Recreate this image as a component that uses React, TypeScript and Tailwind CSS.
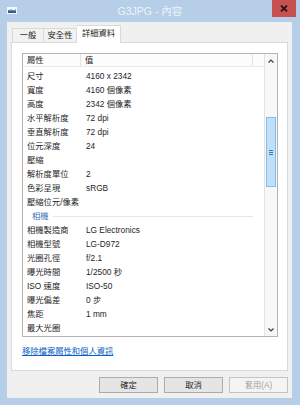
import React from "react";

// ── Data ──

type Row = { label: string; value?: string; group?: boolean };

const ROWS: Row[] = [
  { label: "尺寸", value: "4160 x 2342" },
  { label: "寬度", value: "4160 個像素" },
  { label: "高度", value: "2342 個像素" },
  { label: "水平解析度", value: "72 dpi" },
  { label: "垂直解析度", value: "72 dpi" },
  { label: "位元深度", value: "24" },
  { label: "壓縮" },
  { label: "解析度單位", value: "2" },
  { label: "色彩呈現", value: "sRGB" },
  { label: "壓縮位元/像素" },
  { label: "相機", group: true },
  { label: "相機製造商", value: "LG Electronics" },
  { label: "相機型號", value: "LG-D972" },
  { label: "光圈孔徑", value: "f/2.1" },
  { label: "曝光時間", value: "1/2500 秒" },
  { label: "ISO 速度", value: "ISO-50" },
  { label: "曝光偏差", value: "0 步" },
  { label: "焦距", value: "1 mm" },
  { label: "最大光圈" },
];

// ── Pieces ──

function TitleBar() {
  return (
    <div className="grid h-[22px] grid-cols-[1fr_auto_1fr] items-start">
      <div className="flex pl-[7px] pt-[7px]">
        <svg width="10" height="7" viewBox="0 0 10 7">
          <rect x="0" y="0" width="10" height="7" fill="#f4f7fa" />
          <rect x="1" y="3" width="8" height="3" fill="#2f5f86" />
          <path d="M1 4 L4 2 L6 3.5 L9 2 V4 H1Z" fill="#6e9cc0" />
        </svg>
      </div>
      <div className="pt-[4px] text-[10.5px] leading-[14px] text-[#eef3f8]">G3JPG - 內容</div>
      <div className="flex justify-end pr-[4px]">
        <div className="flex h-[17px] w-[24px] items-center justify-center bg-[#c75050]">
          <svg width="8" height="7" viewBox="0 0 8 7">
            <path d="M1 0.5 L7 6.5 M7 0.5 L1 6.5" stroke="#2b1717" strokeWidth="1.8" />
          </svg>
        </div>
      </div>
    </div>
  );
}

function Tabs() {
  return (
    <div className="flex items-end pl-[1px]">
      <div className="flex h-[14px] w-[32px] items-center justify-center border border-b-0 border-[#d9d9d9] bg-[#f2f2f2]">
        一般
      </div>
      <div className="flex h-[14px] w-[33px] items-center justify-center border border-b-0 border-l-0 border-[#d9d9d9] bg-[#f2f2f2]">
        安全性
      </div>
      <div className="relative z-10 -mb-[1px] flex h-[18px] w-[44px] items-center justify-center border border-b-0 border-l-0 border-[#d9d9d9] bg-white pb-[2px]">
        詳細資料
      </div>
    </div>
  );
}

function Scrollbar() {
  return (
    <div className="flex w-[13px] flex-col border-l border-[#e3e3e3] bg-[#f7f7f7]">
      <div className="flex h-[13px] items-center justify-center">
        <svg width="6" height="4" viewBox="0 0 6 4">
          <path d="M0.5 3.5 L3 1 L5.5 3.5" fill="none" stroke="#404040" strokeWidth="1.2" />
        </svg>
      </div>
      <div className="flex-1">
        <div className="mx-[1px] mt-[50px] flex h-[70px] items-center justify-center border border-[#86bce6] bg-[#bfe0f8]">
          <div className="flex flex-col gap-[1px]">
            <div className="h-[1px] w-[4px] bg-[#3f78aa]" />
            <div className="h-[1px] w-[4px] bg-[#3f78aa]" />
            <div className="h-[1px] w-[4px] bg-[#3f78aa]" />
          </div>
        </div>
      </div>
      <div className="flex h-[13px] items-center justify-center">
        <svg width="6" height="4" viewBox="0 0 6 4">
          <path d="M0.5 0.5 L3 3 L5.5 0.5" fill="none" stroke="#404040" strokeWidth="1.2" />
        </svg>
      </div>
    </div>
  );
}

function PropertyList() {
  return (
    <div className="flex h-[284px] border border-[#b4b4b4] bg-white">
      <div className="flex flex-1 flex-col">
        {/* Header */}
        <div className="flex h-[13px] items-center border-b border-[#ebebeb] bg-[#fcfcfc]">
          <div className="flex h-full w-[58px] items-center border-r border-[#e3e3e3] pl-[4px]">屬性</div>
          <div className="flex h-full w-[172px] items-center border-r border-[#e3e3e3] pl-[4px]">值</div>
        </div>
        <div className="pt-[2px]">
          {ROWS.map((r) =>
            r.group ? (
              <div key={r.label} className="flex h-[14px] items-center pl-[9px] pr-[11px]">
                <span className="text-[#3d6fb6]">{r.label}</span>
                <div className="ml-[4px] h-[1px] flex-1 bg-[#e6e6e6]" />
              </div>
            ) : (
              <div key={r.label} className="flex h-[14px] items-center">
                <div className="w-[63px] pl-[4px]">{r.label}</div>
                <div>{r.value}</div>
              </div>
            )
          )}
        </div>
      </div>
      <Scrollbar />
    </div>
  );
}

function Button({ label, disabled }: { label: string; disabled?: boolean }) {
  return (
    <div
      className={
        disabled
          ? "flex h-[16px] w-[59px] items-center justify-center border border-[#c4c4c4] bg-[#f4f4f4] text-[#a3a3a3]"
          : "flex h-[16px] w-[59px] items-center justify-center border border-[#acacac] bg-[#e5e5e5]"
      }
    >
      {label}
    </div>
  );
}

// ── App ──

export default function App() {
  return (
    <div className="flex h-[405px] w-[300px] flex-col bg-[#b6cee8] font-['Liberation_Sans','Noto_Sans_CJK_TC',sans-serif] text-[8.3px] leading-none text-[#1e1e1e]">
      <TitleBar />
      <div className="mb-[7px] ml-[7px] mr-[8px] flex flex-1 flex-col bg-[#f0f0f0] px-[4px] pt-[3px]">
        <Tabs />
        <div className="h-[329px] border border-[#d9d9d9] bg-white pl-[10px] pr-[9px] pt-[10px]">
          <PropertyList />
          <div className="mt-[10px] text-[#0a5fc2] underline">移除檔案屬性和個人資訊</div>
        </div>
        <div className="mt-[6px] flex justify-end gap-[6px]">
          <Button label="確定" />
          <Button label="取消" />
          <Button label="套用(A)" disabled />
        </div>
      </div>
    </div>
  );
}
